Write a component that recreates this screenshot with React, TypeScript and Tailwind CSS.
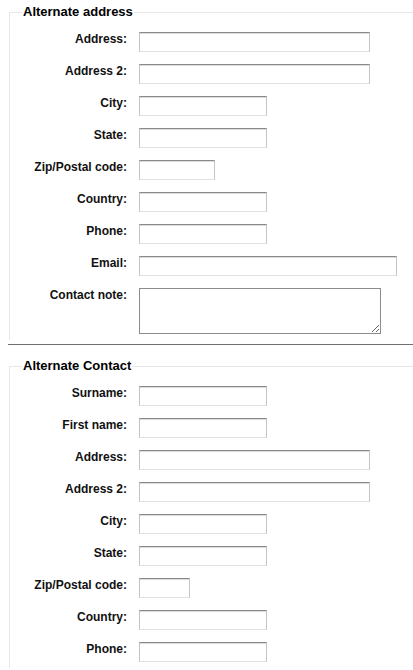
import React from "react";

type Field = { label: string; width: number; type?: "textarea" };

const addressFields: Field[] = [
    { label: "Address:", width: 231 },
    { label: "Address 2:", width: 231 },
    { label: "City:", width: 128 },
    { label: "State:", width: 128 },
    { label: "Zip/Postal code:", width: 76 },
    { label: "Country:", width: 128 },
    { label: "Phone:", width: 128 },
    { label: "Email:", width: 258 },
    { label: "Contact note:", width: 242, type: "textarea" },
];

const contactFields: Field[] = [
    { label: "Surname:", width: 128 },
    { label: "First name:", width: 128 },
    { label: "Address:", width: 231 },
    { label: "Address 2:", width: 231 },
    { label: "City:", width: 128 },
    { label: "State:", width: 128 },
    { label: "Zip/Postal code:", width: 51 },
    { label: "Country:", width: 128 },
    { label: "Phone:", width: 128 },
];

const inputClass =
    "h-[20px] bg-white border border-[#c3c3c3] border-t-[#8a8a8a] border-b-[#e0e0e0] shadow-[inset_0_1px_0_#dcdcdc] outline-none";

const FormRow = ({ field }: { field: Field }) => (
    <div className="flex items-start gap-[12px] mb-[12px] last:mb-[6px]">
        <label className="w-[117px] shrink-0 text-right text-[12px] leading-[15px] font-bold text-[#111]">
            {field.label}
        </label>
        {field.type === "textarea" ? (
            <textarea
                className="h-[46px] bg-white border border-[#8c8c8c] outline-none"
                style={{ width: field.width }}
            />
        ) : (
            <input type="text" className={inputClass} style={{ width: field.width }} />
        )}
    </div>
);

const Section = ({ title, fields }: { title: string; fields: Field[] }) => (
    <fieldset className="ml-[9px] border border-r-0 border-b-0 border-[#e8e8e8] pt-[12px]">
        <legend className="ml-[12px] px-[1px] text-[13px] leading-[16px] font-bold text-black">
            {title}
        </legend>
        {fields.map((f) => (
            <FormRow key={f.label} field={f} />
        ))}
    </fieldset>
);

const App: React.FC = () => {
    return (
        <div className="w-[413px] h-[670px] overflow-hidden bg-white font-['Liberation_Sans',Arial,sans-serif] pt-[4px]">
            <Section title="Alternate address" fields={addressFields} />
            <div className="ml-[8px] mt-[4px] border-t border-[#707070]" />
            <div className="mt-[13px]">
                <Section title="Alternate Contact" fields={contactFields} />
            </div>
        </div>
    );
};

export default App;
